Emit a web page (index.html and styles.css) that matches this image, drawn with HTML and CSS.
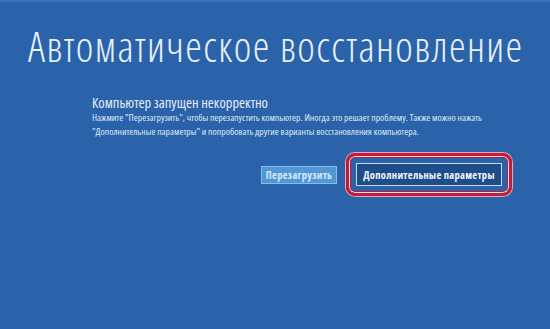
FILE: index.html
```html
<!DOCTYPE html>
<html lang="ru">
<head>
<meta charset="utf-8">
<link rel="stylesheet" href="styles.css">
</head>
<body>
<div class="screen">
  <h1 class="title">Автоматическое восстановление</h1>
  <div class="content">
    <h2 class="subtitle">Компьютер запущен некорректно</h2>
    <p class="desc">Нажмите "Перезагрузить", чтобы перезапустить компьютер. Иногда это решает проблему. Также можно нажать<br>"Дополнительные параметры" и попробовать другие варианты восстановления компьютера.</p>
  </div>
  <div class="actions">
    <button class="btn btn-light">Перезагрузить</button>
    <div class="ring">
      <button class="btn btn-dark">Дополнительные параметры</button>
    </div>
  </div>
</div>
</body>
</html>
```

FILE: styles.css
```css
html, body {
  margin: 0;
  padding: 0;
}
body {
  width: 550px;
  height: 329px;
  background: #2b63ab;
  overflow: hidden;
  font-family: "Open Sans", "Noto Sans", sans-serif;
  color: #e6eef9;
}
.screen {
  height: 327px;
  border-top: 2px solid #3a71b8;
}
.title {
  margin: 0;
  padding: 21px 0 0 28px;
  font-stretch: 75%;
  font-size: 42px;
  font-weight: 300;
  letter-spacing: 1.4px;
  line-height: 46px;
  color: #e9f1fb;
  white-space: nowrap;
}
.content {
  padding: 25px 0 0 92px;
}
.subtitle {
  margin: 0;
  font-stretch: 75%;
  font-size: 14.5px;
  font-weight: 400;
  line-height: 17px;
  color: #e4edf8;
}
.desc {
  margin: 0;
  font-stretch: 75%;
  font-size: 9.7px;
  line-height: 14px;
  color: #dfe9f6;
  white-space: nowrap;
}
.actions {
  display: flex;
  justify-content: flex-end;
  align-items: center;
  gap: 9px;
  padding: 14px 38px 0 0;
}
.btn {
  font-family: "Open Sans", "Noto Sans", sans-serif;
  font-stretch: 75%;
  font-weight: 700;
  font-size: 10.5px;
  letter-spacing: 0.3px;
  margin: 0;
  cursor: default;
}
.btn-light {
  width: 76px;
  height: 18px;
  padding: 0;
  background: #5197d6;
  border: 1px solid #86bce8;
  color: #d7ebfc;
}
.btn-dark {
  width: 146px;
  height: 23px;
  padding: 0;
  background: #1f4c8a;
  border: 1px solid #c9d9ee;
  color: #f2f6fc;
  display: block;
}
.ring {
  padding: 7px;
  border: 3px solid #c31d3d;
  border-radius: 9px;
  box-shadow: 0 0 0 1px #eaa6b6, inset 0 0 0 1px #f6dbe1, inset 0 0 0 2px #b5203f;
}
```
